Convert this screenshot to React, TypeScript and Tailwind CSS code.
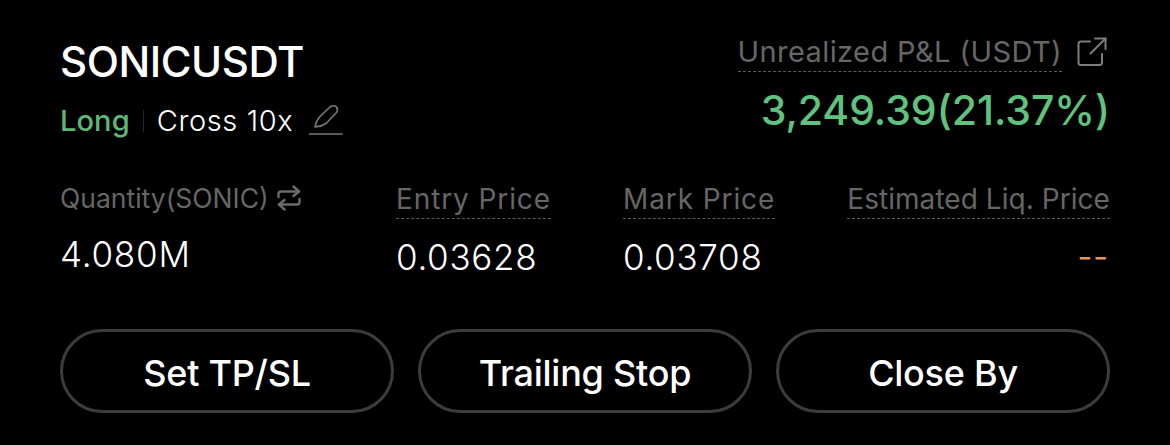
import React from "react";

function Pencil() {
  return (
    <svg width="34" height="34" viewBox="0 0 34 34" fill="none" stroke="#777777" strokeWidth="1.7" strokeLinejoin="round" strokeLinecap="round">
      <path d="M6 23 C6.5 19.5 8 16 10 13.5 L21 3 C23 1.5 26 1.5 27.5 3 C28.5 4.5 28.5 7 27.5 8.5 L17 19.5 C14 21.5 10 22.8 6 23 Z" />
      <path d="M0.5 30 H33" />
    </svg>
  );
}

function External() {
  return (
    <svg width="30" height="30" viewBox="0 0 30 30" fill="none" stroke="#7d7d7d" strokeWidth="2" strokeLinecap="round" strokeLinejoin="round">
      <path d="M13 4.5 H4 C2.5 4.5 1.5 5.5 1.5 7 V25.5 C1.5 27 2.5 28 4 28 H22.5 C24 28 25 27 25 25.5 V17" />
      <path d="M13.5 16.5 L28.5 1.5" />
      <path d="M18 1.5 H28.5 V12" />
    </svg>
  );
}

function Swap() {
  return (
    <svg width="24" height="26" viewBox="0 0 24 26" fill="none" stroke="#6b6b6b" strokeWidth="2.4" strokeLinecap="round" strokeLinejoin="round">
      <path d="M1.5 12 V9 C1.5 7.5 2.5 6.5 4 6.5 H22" />
      <path d="M16.5 1.5 L22 6.5 L16.5 11" />
      <path d="M22.5 14 V17 C22.5 18.5 21.5 19.5 20 19.5 H2" />
      <path d="M7.5 15 L2 19.5 L7.5 24.5" />
    </svg>
  );
}

function DottedLabel({ children, className = "" }: { children: React.ReactNode; className?: string }) {
  return (
    <span className={`border-b border-dashed border-[#5a5a5a] text-[#666666] whitespace-nowrap ${className}`}>
      {children}
    </span>
  );
}

function Pill({ children }: { children: React.ReactNode }) {
  return (
    <button className="h-[84px] flex-1 rounded-full border-[3px] border-[#3c3c3c] bg-black pt-[4px] text-[36px] font-medium tracking-[-0.25px] text-white">
      {children}
    </button>
  );
}

export default function App() {
  return (
    <div
      className="h-[445px] w-[1170px] overflow-hidden bg-black px-[60px] pt-[36px] text-white"
      style={{ fontFamily: "Inter, 'Liberation Sans', sans-serif" }}
    >
      <div className="flex justify-between">
        <div className="flex flex-col">
          <div className="text-[42px] leading-[52px] font-medium tracking-[-0.45px]">SONICUSDT</div>
          <div className="mt-[13px] flex h-[40px] items-center text-[29px]">
            <span className="font-medium tracking-[0.1px] text-[#5fb878]">Long</span>
            <span className="mx-[13px] h-[22px] w-px bg-[#262626]" />
            <span className="font-light tracking-[0.6px]">Cross 10x</span>
            <span className="ml-[16px] flex">
              <Pencil />
            </span>
          </div>
        </div>
        <div className="flex flex-col items-end">
          <div className="flex items-start">
            <DottedLabel className="h-[36px] text-[29px] leading-[31px] tracking-[0.4px]">Unrealized P&amp;L (USDT)</DottedLabel>
            <span className="mt-[1px] mr-[3px] ml-[15px] flex">
              <External />
            </span>
          </div>
          <div className="mt-[12px] text-[41px] leading-[52px] font-medium tracking-[-0.05px] text-[#5fc27e]">3,249.39(21.37%)</div>
        </div>
      </div>

      <div className="mt-[42px] flex justify-between">
        <div className="flex w-[336px] flex-col">
          <div className="flex h-[36px] items-start">
            <span className="text-[26.5px] leading-[30px] tracking-[0px] whitespace-nowrap text-[#666666]">Quantity(SONIC)</span>
            <span className="mt-[2px] ml-[8px] flex">
              <Swap />
            </span>
          </div>
          <div className="mt-[14px] text-[35px] leading-[42px] font-light tracking-[0.8px]">4.080M</div>
        </div>
        <div className="flex w-[227px] flex-col items-start">
          <DottedLabel className="h-[36px] text-[28px] leading-[32px] tracking-[0.9px]">Entry Price</DottedLabel>
          <div className="mt-[17px] text-[35px] leading-[42px] font-light tracking-[0.7px]">0.03628</div>
        </div>
        <div className="flex flex-1 flex-col items-start">
          <DottedLabel className="h-[36px] text-[28px] leading-[32px] tracking-[0.9px]">Mark Price</DottedLabel>
          <div className="mt-[17px] text-[35px] leading-[42px] font-light tracking-[0.7px]">0.03708</div>
        </div>
        <div className="flex flex-col items-end">
          <DottedLabel className="h-[36px] text-[28px] leading-[32px] tracking-[0.05px]">Estimated Liq. Price</DottedLabel>
          <div className="mt-[17px] pr-[1px] text-[32px] leading-[42px] tracking-[1px] text-[#e39a5c]">--</div>
        </div>
      </div>

      <div className="mt-[51px] flex gap-[24px]">
        <Pill>Set TP/SL</Pill>
        <Pill>Trailing Stop</Pill>
        <Pill>Close By</Pill>
      </div>
    </div>
  );
}
